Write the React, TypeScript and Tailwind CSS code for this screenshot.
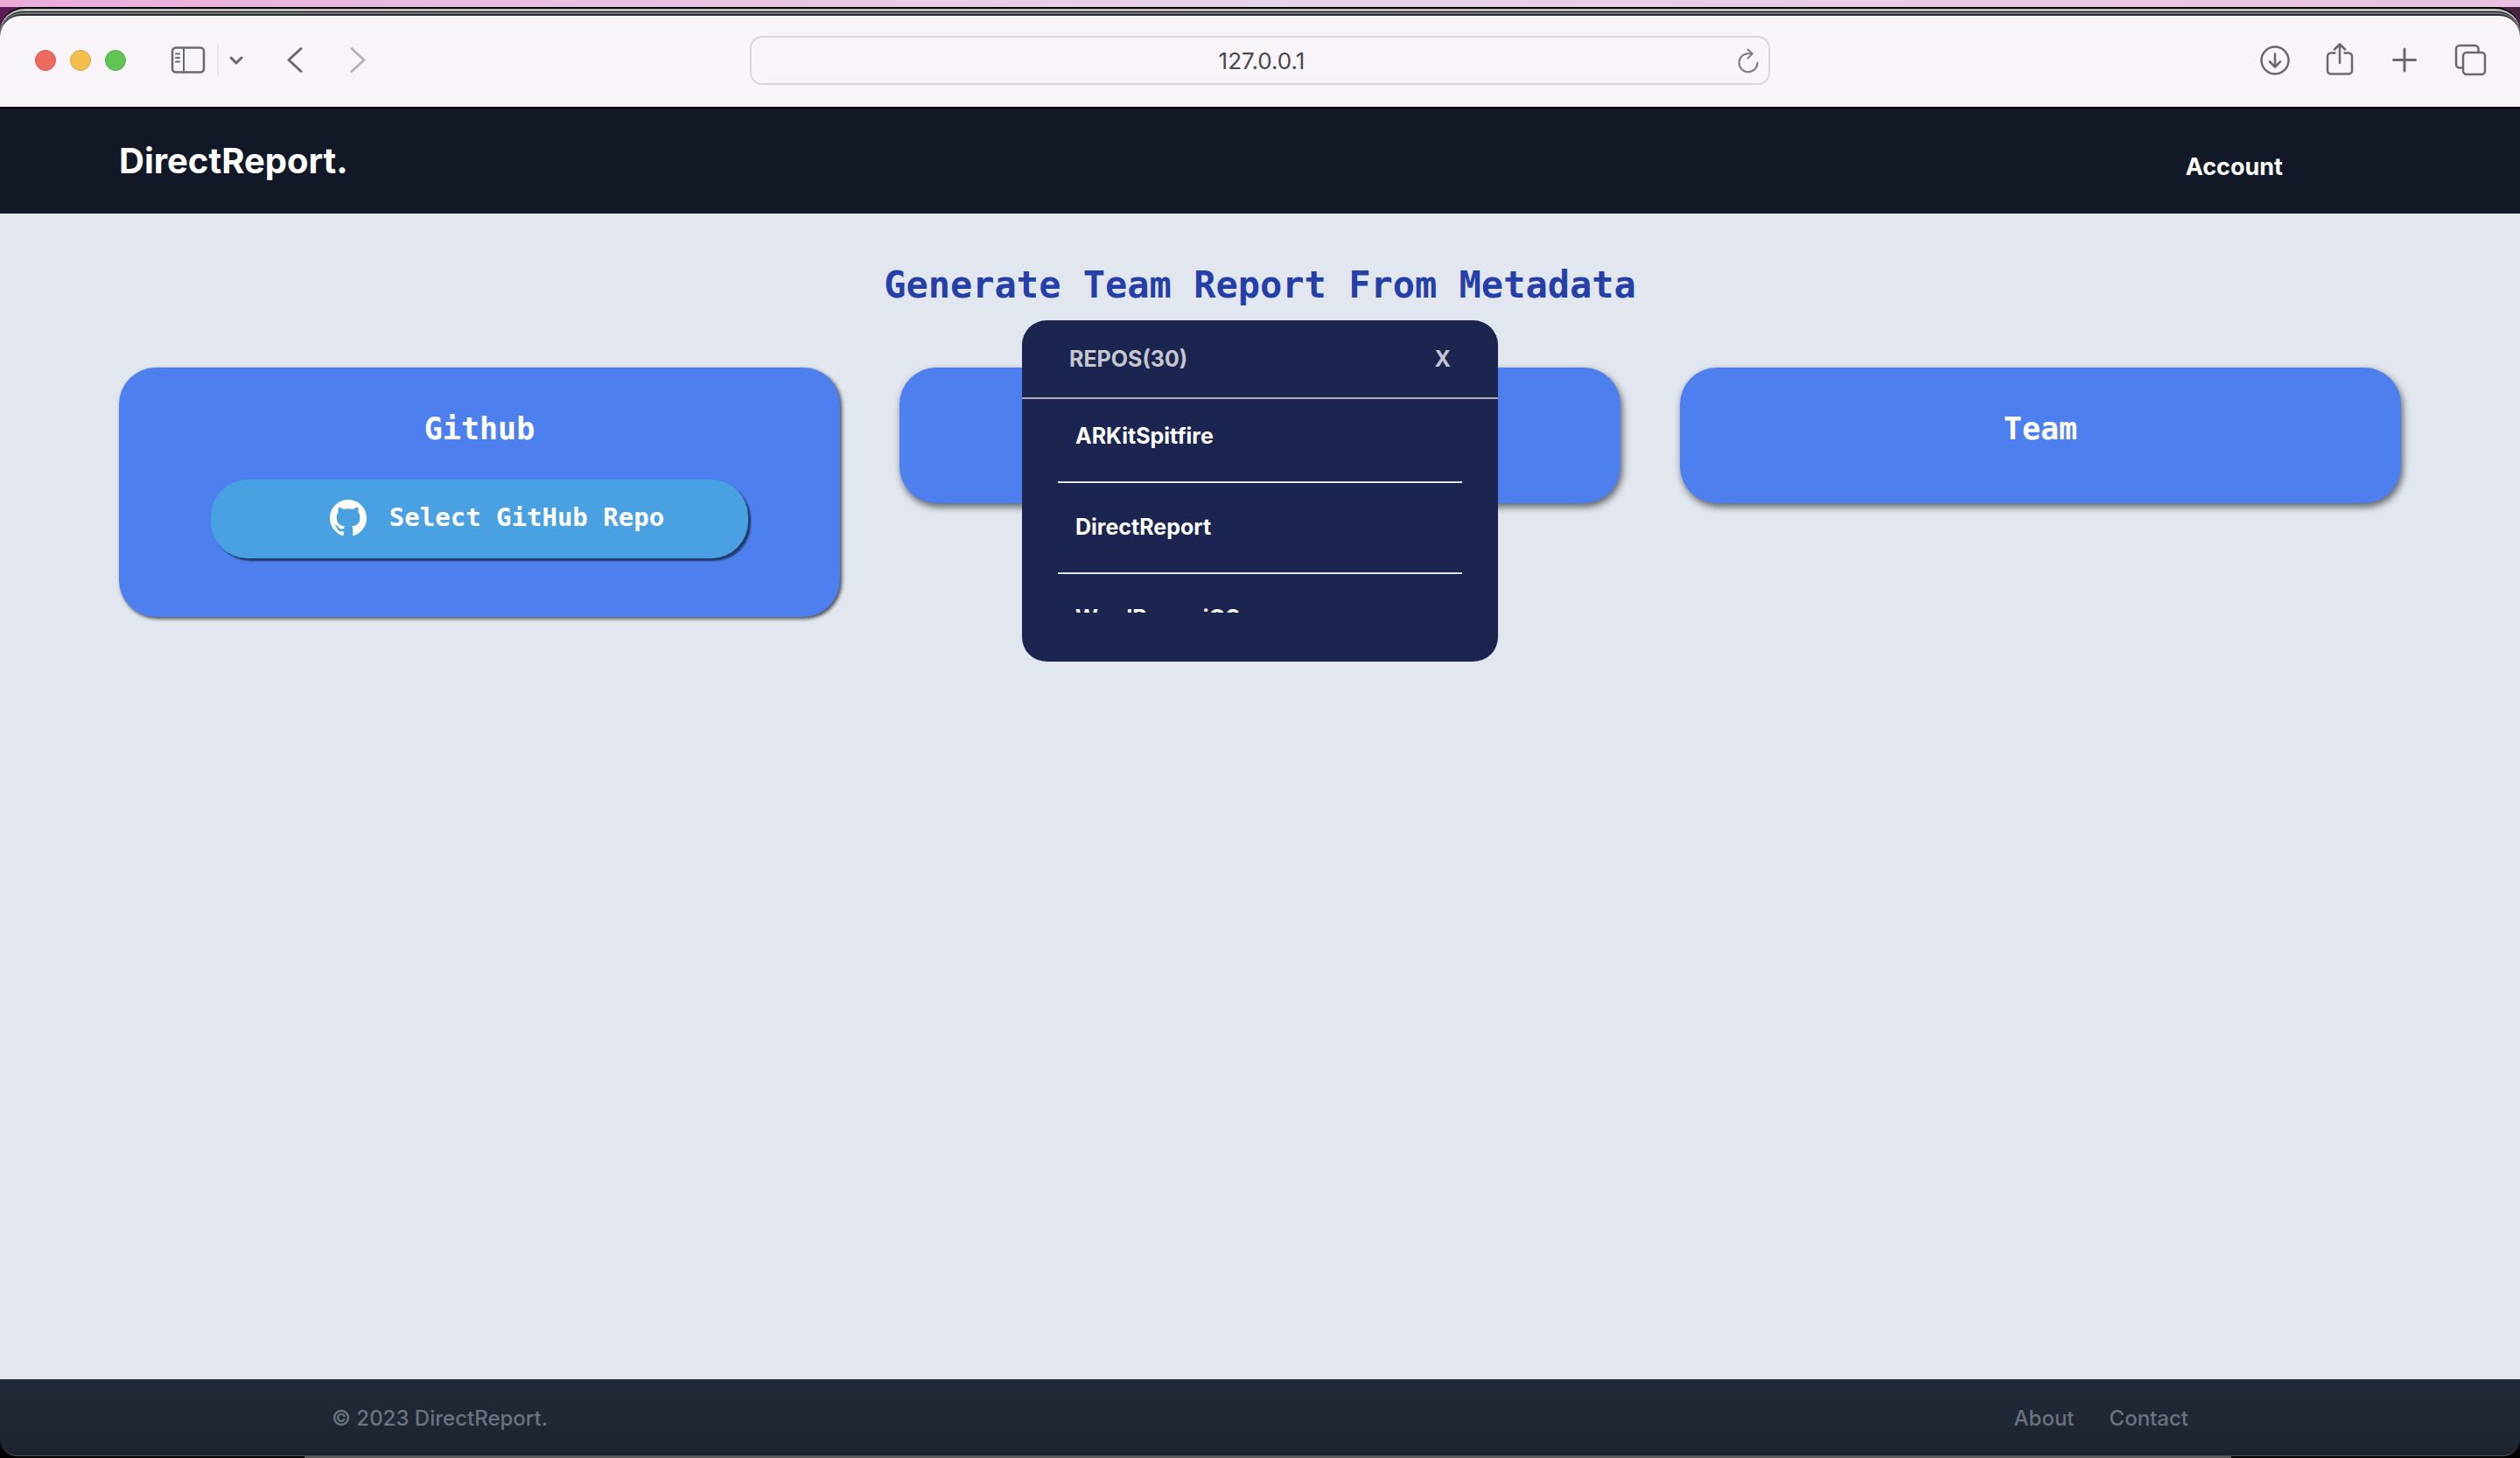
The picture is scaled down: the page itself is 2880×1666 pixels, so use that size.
import { ReactNode } from "react";

function IconButton({ label, children }: { label: string; children: ReactNode }) {
  return (
    <button type="button" aria-label={label} className="block text-[#6c666e]">
      {children}
    </button>
  );
}

const stroke = {
  fill: "none",
  stroke: "currentColor",
  strokeWidth: 3,
  strokeLinecap: "round" as const,
  strokeLinejoin: "round" as const,
};

function Toolbar() {
  return (
    <div className="grid h-[106px] grid-cols-[1fr_1166px_1fr] items-center rounded-t-[24px] border-b-2 border-black bg-[#f8f4fa] pb-0.5">
      <div className="flex items-center pl-10">
        <div className="flex gap-4">
          <span className="size-6 rounded-full border border-[#d9594d] bg-[#ec6b5f]" />
          <span className="size-6 rounded-full border border-[#d9a33f] bg-[#f4bf4f]" />
          <span className="size-6 rounded-full border border-[#4fae41] bg-[#61c554]" />
        </div>
        <div className="ml-[50px] flex items-center">
          <IconButton label="Show sidebar">
            <svg width="42" height="32" viewBox="0 0 42 32" {...stroke} strokeWidth="2.500">
              <rect x="3" y="1.500" width="36" height="28" rx="4" />
              <path d="M16 2v28" strokeWidth="2" />
              <path d="M7 8.500h4M7 13h4M7 17.500h4" strokeWidth="2" />
            </svg>
          </IconButton>
          <span className="ml-3 h-9 w-0.5 bg-[#e9e4eb]" />
          <span className="ml-3">
            <IconButton label="Sidebar options">
              <svg width="16" height="12" viewBox="0 0 16 12" {...stroke}>
                <path d="M2 3l6 6 6-6" />
              </svg>
            </IconButton>
          </span>
        </div>
        <div className="ml-[50px] flex items-center gap-[52px]">
          <IconButton label="Back">
            <svg width="20" height="32" viewBox="0 0 20 32" {...stroke}>
              <path d="M16 2.500L2 15.500l14 13" />
            </svg>
          </IconButton>
          <span className="opacity-45">
            <IconButton label="Forward">
              <svg width="20" height="32" viewBox="0 0 20 32" {...stroke}>
                <path d="M2 2.500l14 13-14 13" />
              </svg>
            </IconButton>
          </span>
        </div>
      </div>
      <div className="flex h-14 items-center rounded-[14px] border-2 border-[#dad6dc] pr-2.5 pl-10">
        <input
          aria-label="Address"
          defaultValue="127.0.0.1"
          className="min-w-0 flex-1 bg-transparent text-center text-[26px] text-[#4a474c] outline-none"
        />
        <button type="button" aria-label="Reload" className="text-[#7d797f]">
          <svg width="26" height="30" viewBox="0 0 26 30" {...stroke} strokeWidth="2">
            <path d="M23.500 17.500A10.500 10.500 0 1 1 13 7.200h4.500" />
            <path d="M12.500 2.500l5.200 4.900-5.200 5.200" />
          </svg>
        </button>
      </div>
      <div className="flex items-center justify-end gap-[38px] pr-9">
        <IconButton label="Downloads">
          <svg width="36" height="40" viewBox="0 0 36 40" {...stroke} strokeWidth="2.500">
            <circle cx="18" cy="20" r="15.500" />
            <path d="M18 12.500v14.500M12 21.500l6 6 6-6" />
          </svg>
        </IconButton>
        <IconButton label="Share">
          <svg width="36" height="40" viewBox="0 0 36 40" {...stroke} strokeWidth="2.500">
            <path d="M13.500 11.500H8a4 4 0 0 0-4 4v16a4 4 0 0 0 4 4h20a4 4 0 0 0 4-4v-16a4 4 0 0 0-4-4h-5.500" strokeLinecap="butt" />
            <path d="M18 23V1.500M12 7.500L18 1.500l6 6" />
          </svg>
        </IconButton>
        <IconButton label="New tab">
          <svg width="36" height="40" viewBox="0 0 36 40" {...stroke}>
            <path d="M18 7v25M5.500 19.500h25" />
          </svg>
        </IconButton>
        <IconButton label="Show tabs">
          <svg width="40" height="40" viewBox="0 0 40 40" {...stroke} strokeWidth="2.500">
            <rect x="11" y="11" width="25" height="25" rx="4" />
            <path d="M11 28.500H7a4 4 0 0 1-4-4V7a4 4 0 0 1 4-4h17.500a4 4 0 0 1 4 4v4" strokeLinecap="butt" />
          </svg>
        </IconButton>
      </div>
    </div>
  );
}

function GithubMark() {
  return (
    <svg width="42" height="42" viewBox="0 0 16 16" fill="currentColor" aria-hidden="true">
      <path d="M8 0C3.580 0 0 3.580 0 8c0 3.540 2.290 6.530 5.470 7.590.4.070.55-.17.55-.38 0-.19-.01-.82-.01-1.490-2.010.37-2.530-.49-2.690-.94-.09-.23-.48-.94-.82-1.130-.28-.15-.68-.52-.01-.53.63-.01 1.080.58 1.230.82.72 1.210 1.870.87 2.330.66.07-.52.28-.87.51-1.070-1.780-.2-3.640-.89-3.640-3.950 0-.87.31-1.590.82-2.150-.08-.2-.36-1.020.08-2.120 0 0 .67-.21 2.200.82.64-.18 1.320-.27 2-.27s1.360.09 2 .27c1.530-1.040 2.200-.82 2.200-.82.44 1.100.16 1.920.08 2.120.51.56.82 1.270.82 2.150 0 3.070-1.870 3.750-3.650 3.950.29.25.54.73.54 1.480 0 1.070-.01 1.930-.01 2.200 0 .21.15.46.55.38A8.010 8.010 0 0 0 16 8c0-4.420-3.580-8-8-8z" />
    </svg>
  );
}

function Card({ title, raised, children }: { title?: string; raised?: boolean; children?: ReactNode }) {
  return (
    <section
      className={`flex flex-col items-center rounded-[42px] bg-[#4d80ee] px-[105px] pt-[46px] pb-[61px] text-white ${
        raised ? "shadow-[2px_4px_8px_rgba(0,0,0,0.6)]" : "shadow-[2px_2px_4px_rgba(0,0,0,0.7)]"
      }`}
    >
      <div className="h-12 font-['DejaVu_Sans_Mono',monospace] text-[35px] leading-[48px] font-bold">
        {title && <h2>{title}</h2>}
      </div>
      {children}
    </section>
  );
}

const repos = ["ARKitSpitfire", "DirectReport", "WordPress-iOS"];

function RepoDialog() {
  return (
    <div
      role="dialog"
      aria-label="Repositories"
      className="absolute top-[122px] left-1/2 w-[544px] -translate-x-1/2 rounded-[28px] bg-[#1b2550] pb-14 text-[25px] font-bold"
    >
      <div className="flex h-[90px] items-center justify-between border-b-2 border-[#acafc0] px-[54px] pt-0.5 text-[#c4c6d0]">
        <h2>REPOS(30)</h2>
        <button type="button" aria-label="Close">X</button>
      </div>
      <ul className="h-[244px] overflow-hidden px-[41px] text-white">
        {repos.map((name) => (
          <li key={name} className="h-[104px] border-b-2 border-[#e2e6ee] first:-mt-2">
            <button type="button" className="block h-full w-full px-5 text-left">{name}</button>
          </li>
        ))}
      </ul>
    </div>
  );
}

export default function App() {
  return (
    <div className="flex min-h-screen flex-col bg-[#050308] font-[Inter,sans-serif]">
      <div className="h-2 bg-linear-to-r from-[#eaacd9] via-[#e5d5ea] to-[#eac0e0]" />
      <div className="flex flex-1 flex-col bg-linear-to-r from-[#5a1c55] to-[#4a2440] bg-[length:100%_60px] bg-no-repeat">
        <div className="flex flex-1 flex-col rounded-t-[28px] border-t-2 border-black bg-[#c0bdbf] pt-[3px]">
          <div className="flex flex-1 flex-col rounded-t-[26px] border-t border-black bg-[#7b7d80] pt-0.5">
            <div className="flex flex-1 flex-col rounded-t-[25px] bg-[#26292d] pt-0.5">
              <Toolbar />
              <header className="flex h-[120px] items-center justify-between bg-[#121826] pr-[271px] pl-[136px] text-white">
                <a href="#" className="text-[40px] leading-[56px] font-bold">DirectReport.</a>
                <a href="#account" className="pt-3.5 text-[27px] font-bold">Account</a>
              </header>
              <main className="relative flex-1 bg-[#e2e7ef] px-[136px] pt-[52px]">
                <h1 className="text-center font-['DejaVu_Sans_Mono',monospace] text-[42px] leading-[60px] font-bold text-[#253ea8]">
                  Generate Team Report From Metadata
                </h1>
                <div className="mt-16 grid grid-cols-3 items-start gap-[68px]">
                  <Card title="Github">
                    <button
                      type="button"
                      className="mt-[34px] mb-1.5 flex h-[90px] w-full items-center justify-center gap-[26px] rounded-[42px] bg-[#4aa1e2] pb-0.5 pl-10 font-['DejaVu_Sans_Mono',monospace] text-[29px] font-bold shadow-[3px_3px_2px_rgba(0,0,0,0.55)]"
                    >
                      <GithubMark />
                      Select GitHub Repo
                    </button>
                  </Card>
                  <Card raised />
                  <Card title="Team" raised />
                </div>
                <RepoDialog />
              </main>
              <div className="bg-black">
                <footer className="flex h-[88px] items-center justify-between rounded-b-[20px] border-b border-[#4a505c] bg-linear-to-b from-[#232937] to-[#1e242f] px-[379px] pt-0.5 text-[24px] font-medium text-[#6b7280]">
                  <p>© 2023 DirectReport.</p>
                  <nav className="flex gap-10">
                    <a href="#about">About</a>
                    <a href="#contact">Contact</a>
                  </nav>
                </footer>
                <div className="mr-[330px] ml-[348px] h-0.5 bg-[#5c5a5a]" />
              </div>
            </div>
          </div>
        </div>
      </div>
    </div>
  );
}
